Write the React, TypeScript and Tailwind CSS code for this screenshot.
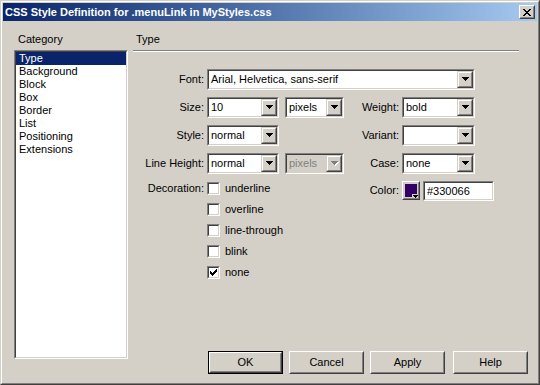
import React from 'react';

const Arrow = ({ disabled }: { disabled?: boolean }) => (
  <svg width="8" height="5" viewBox="0 0 8 5" shapeRendering="crispEdges">
    {disabled && (
      <path d="M1 1h7v1H1zM2 2h5v1H2zM3 3h3v1H3zM4 4h1v1H4z" fill="#ffffff" />
    )}
    <path d="M0 0h7v1H0zM1 1h5v1H1zM2 2h3v1H2zM3 3h1v1H3z" fill={disabled ? '#808080' : '#000000'} />
  </svg>
);

const DropButton = ({ disabled }: { disabled?: boolean }) => (
  <div className="w-[16px] h-full border border-t-[#D4D0C8] border-l-[#D4D0C8] border-r-[#404040] border-b-[#404040]">
    <div className="w-full h-full bg-[#D4D0C8] border border-t-white border-l-white border-r-[#808080] border-b-[#808080] flex items-center justify-center pl-[1px]">
      <Arrow disabled={disabled} />
    </div>
  </div>
);

interface ComboProps {
  width: string;
  value: string;
  disabled?: boolean;
}

const Combo: React.FC<ComboProps> = ({ width, value, disabled }) => (
  <div className={`${width} h-[21px] shrink-0 border border-t-[#808080] border-l-[#808080] border-r-white border-b-white`}>
    <div
      className={`h-full flex border border-t-[#404040] border-l-[#404040] border-r-[#D4D0C8] border-b-[#D4D0C8] ${
        disabled ? 'bg-[#D4D0C8] text-[#808080]' : 'bg-white'
      }`}
    >
      <div className="flex-1 pl-[2px] leading-[17px] whitespace-nowrap overflow-hidden">{value}</div>
      <DropButton disabled={disabled} />
    </div>
  </div>
);

const CheckBox = ({ checked }: { checked?: boolean }) => (
  <div className="w-[13px] h-[13px] shrink-0 border border-t-[#808080] border-l-[#808080] border-r-white border-b-white">
    <div className="w-full h-full bg-white border border-t-[#404040] border-l-[#404040] border-r-[#D4D0C8] border-b-[#D4D0C8] flex items-center justify-center">
      {checked && (
        <svg width="7" height="7" viewBox="0 0 7 7" shapeRendering="crispEdges">
          <path
            d="M6 0h1v1H6zM5 1h2v1H5zM0 2h1v1H0zM4 2h3v1H4zM0 3h2v1H0zM3 3h3v1H3zM0 4h5v1H0zM1 5h3v1H1zM2 6h1v1H2z"
            fill="#000000"
          />
        </svg>
      )}
    </div>
  </div>
);

const PushButton = ({ label, isDefault }: { label: string; isDefault?: boolean }) => {
  const bevel = (
    <div className="w-full h-full border border-t-white border-l-white border-r-[#404040] border-b-[#404040]">
      <div className="w-full h-full border border-t-[#D4D0C8] border-l-[#D4D0C8] border-r-[#808080] border-b-[#808080] flex items-center justify-center leading-[13px]">
        {label}
      </div>
    </div>
  );
  return (
    <div className={`w-[75px] h-[23px] bg-[#D4D0C8] ${isDefault ? 'border border-black' : ''}`}>{bevel}</div>
  );
};

const decorations = ['underline', 'overline', 'line-through', 'blink', 'none'];
const categories = ['Type', 'Background', 'Block', 'Box', 'Border', 'List', 'Positioning', 'Extensions'];

export default function App() {
  return (
    <div className="w-[540px] h-[385px] font-['Liberation_Sans',Arial,sans-serif] text-[11px] text-black">
      <div className="w-full h-full border border-t-[#D4D0C8] border-l-[#D4D0C8] border-r-[#404040] border-b-[#404040]">
        <div className="w-full h-full flex flex-col p-[1px] bg-[#D4D0C8] border border-t-white border-l-white border-r-[#808080] border-b-[#808080]">
          {/* title bar */}
          <div className="h-[18px] shrink-0 flex items-center px-[2px] bg-linear-to-r from-[#0A246A] to-[#A6CAF0]">
            <span className="flex-1 font-bold text-white leading-[13px] whitespace-nowrap">
              CSS Style Definition for .menuLink in MyStyles.css
            </span>
            <div className="w-[16px] h-[14px] border border-t-white border-l-white border-r-[#404040] border-b-[#404040]">
              <div className="w-full h-full bg-[#D4D0C8] border border-t-[#D4D0C8] border-l-[#D4D0C8] border-r-[#808080] border-b-[#808080] flex items-center justify-center">
                <svg width="8" height="7" viewBox="0 0 8 7" shapeRendering="crispEdges">
                  <path
                    d="M0 0h2v1H0zM6 0h2v1H6zM1 1h2v1H1zM5 1h2v1H5zM2 2h4v1H2zM3 3h2v1H3zM2 4h4v1H2zM1 5h2v1H1zM5 5h2v1H5zM0 6h2v1H0zM6 6h2v1H6z"
                    fill="#000000"
                  />
                </svg>
              </div>
            </div>
          </div>

          {/* body */}
          <div className="flex-1 flex pl-[11px] pr-[9px] pb-[8px]">
            {/* category column */}
            <div className="w-[114px] shrink-0 flex flex-col">
              <div className="mt-[12px] pl-[4px] leading-[13px]">Category</div>
              <div className="mt-[4px] h-[309px] border border-t-[#808080] border-l-[#808080] border-r-white border-b-white">
                <div className="w-full h-full bg-white border border-t-[#404040] border-l-[#404040] border-r-[#D4D0C8] border-b-[#D4D0C8]">
                  {categories.map((c, i) => (
                    <div
                      key={c}
                      className={`h-[13px] leading-[13px] pl-[3px] ${i === 0 ? 'bg-[#0A246A] text-white' : ''}`}
                    >
                      {c}
                    </div>
                  ))}
                </div>
              </div>
            </div>

            {/* type panel */}
            <div className="ml-[5px] flex-1 flex flex-col">
              <div className="mt-[12px] pl-[3px] leading-[13px]">Type</div>
              <div className="mt-[4px] mr-[9px] border-t border-b border-t-[#808080] border-b-white" />

              <div className="mt-[17px] flex flex-col gap-[7px]">
                <div className="h-[21px] flex items-center">
                  <div className="w-[71px] text-right">Font:</div>
                  <div className="ml-[3px]">
                    <Combo width="w-[268px]" value="Arial, Helvetica, sans-serif" />
                  </div>
                </div>
                <div className="h-[21px] flex items-center">
                  <div className="w-[71px] text-right">Size:</div>
                  <div className="ml-[3px] w-[137px] flex">
                    <Combo width="w-[72px]" value="10" />
                    <div className="ml-[6px]">
                      <Combo width="w-[59px]" value="pixels" />
                    </div>
                  </div>
                  <div className="w-[55px] text-right">Weight:</div>
                  <div className="ml-[3px]">
                    <Combo width="w-[73px]" value="bold" />
                  </div>
                </div>
                <div className="h-[21px] flex items-center">
                  <div className="w-[71px] text-right">Style:</div>
                  <div className="ml-[3px] w-[137px] flex">
                    <Combo width="w-[72px]" value="normal" />
                  </div>
                  <div className="w-[55px] text-right">Variant:</div>
                  <div className="ml-[3px]">
                    <Combo width="w-[73px]" value="" />
                  </div>
                </div>
                <div className="h-[21px] flex items-center">
                  <div className="w-[71px] text-right">Line Height:</div>
                  <div className="ml-[3px] w-[137px] flex">
                    <Combo width="w-[72px]" value="normal" />
                    <div className="ml-[6px]">
                      <Combo width="w-[59px]" value="pixels" disabled />
                    </div>
                  </div>
                  <div className="w-[55px] text-right">Case:</div>
                  <div className="ml-[3px]">
                    <Combo width="w-[73px]" value="none" />
                  </div>
                </div>
              </div>

              <div className="mt-[4px] flex items-start">
                <div className="w-[71px] h-[21px] leading-[21px] text-right">Decoration:</div>
                <div className="ml-[3px] w-[137px] flex flex-col">
                  {decorations.map((d) => (
                    <div key={d} className="h-[21px] flex items-center">
                      <CheckBox checked={d === 'none'} />
                      <span className="ml-[5px] leading-[13px]">{d}</span>
                    </div>
                  ))}
                </div>
                <div className="w-[55px] mt-[3px] h-[19px] leading-[19px] text-right">Color:</div>
                <div className="ml-[3px] mt-[3px] relative w-[18px] h-[19px] border border-t-white border-l-white border-r-[#404040] border-b-[#404040]">
                  <div className="w-full h-full bg-[#D4D0C8] border border-t-[#D4D0C8] border-l-[#D4D0C8] border-r-[#808080] border-b-[#808080] p-[1px]">
                    <div className="w-full h-full bg-[#330066]" />
                  </div>
                  <div className="absolute right-[1px] bottom-[1px] w-[6px] h-[4px] bg-[#D4D0C8] flex items-center justify-center">
                    <svg width="5" height="3" viewBox="0 0 5 3" shapeRendering="crispEdges">
                      <path d="M0 0h5v1H0zM1 1h3v1H1zM2 2h1v1H2z" fill="#000000" />
                    </svg>
                  </div>
                </div>
                <div className="ml-[3px] mt-[3px] w-[71px] h-[20px] border border-t-[#808080] border-l-[#808080] border-r-white border-b-white">
                  <div className="w-full h-full bg-white pl-[2px] leading-[16px] border border-t-[#404040] border-l-[#404040] border-r-[#D4D0C8] border-b-[#D4D0C8]">
                    #330066
                  </div>
                </div>
              </div>

              <div className="mt-auto flex justify-end">
                <PushButton label="OK" isDefault />
                <div className="ml-[6px]">
                  <PushButton label="Cancel" />
                </div>
                <div className="ml-[6px]">
                  <PushButton label="Apply" />
                </div>
                <div className="ml-[8px]">
                  <PushButton label="Help" />
                </div>
              </div>
            </div>
          </div>
        </div>
      </div>
    </div>
  );
}
